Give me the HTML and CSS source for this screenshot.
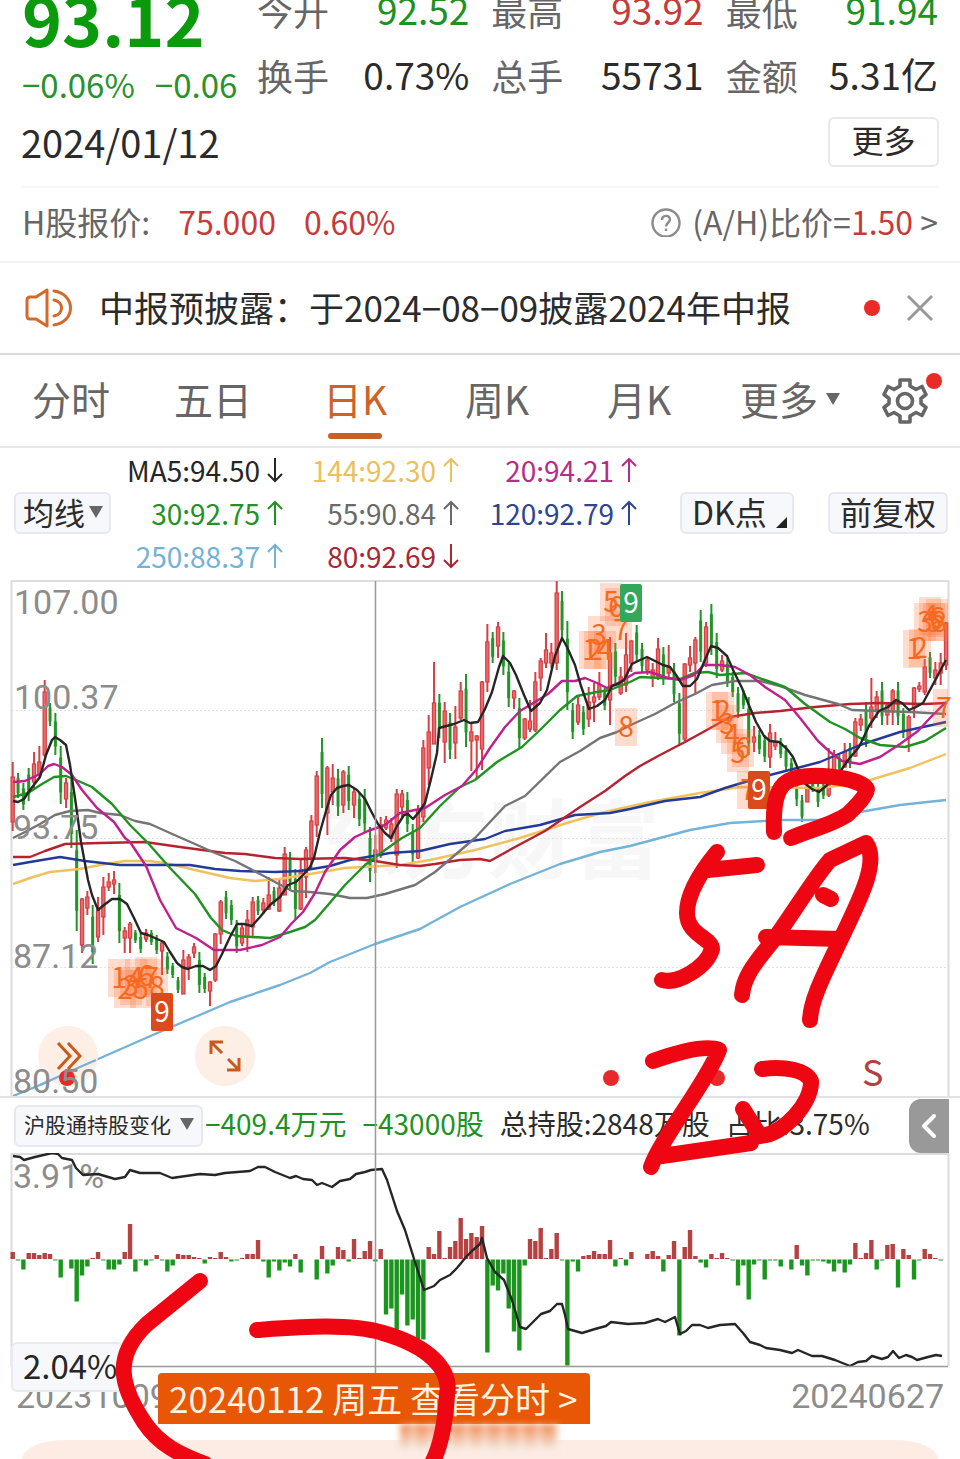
FILE: index.html
```html
<!DOCTYPE html>
<html lang="zh-CN">
<head>
<meta charset="utf-8">
<meta name="viewport" content="width=device-width, initial-scale=1">
<title>日K 行情</title>
<link rel="stylesheet" href="styles.css">
</head>
<body>
<svg class="defs" aria-hidden="true">
  <symbol id="up" viewBox="0 0 16 26"><path d="M8 25V2M1 9l7-7 7 7" fill="none" stroke="currentColor" stroke-width="2"/></symbol>
  <symbol id="down" viewBox="0 0 16 26"><path d="M8 1v23M1 17l7 7 7-7" fill="none" stroke="currentColor" stroke-width="2"/></symbol>
</svg>

<header class="quote">
  <div class="quote-main">
    <strong class="price">93.12</strong>
    <p class="change"><span>−0.06%</span><span>−0.06</span></p>
  </div>
  <dl class="stats">
    <div><dt>今开</dt><dd class="green">92.52</dd></div>
    <div><dt>最高</dt><dd class="red">93.92</dd></div>
    <div><dt>最低</dt><dd class="green">91.94</dd></div>
    <div><dt>换手</dt><dd>0.73%</dd></div>
    <div><dt>总手</dt><dd>55731</dd></div>
    <div><dt>金额</dt><dd>5.31亿</dd></div>
  </dl>
</header>
<div class="date-row"><time datetime="2024-01-12">2024/01/12</time><button class="more" type="button">更多</button></div>

<section class="h-share">
  <span>H股报价:</span><span class="red h-price">75.000</span><span class="red">0.60%</span>
  <a class="ratio" href="#ratio">
    <svg width="32" height="32" viewBox="0 0 32 32" fill="none" stroke="#8c8c8c" stroke-width="2.4"><circle cx="16" cy="18" r="13.5"/><path d="M12 15c0-5.400 8-5.400 8-.4 0 3-4 3.400-4 7"/><path d="M16 23.500v2.500"/></svg>
    <span>(A/H)比价=<b>1.50</b> &gt;</span>
  </a>
</section>

<section class="notice">
  <svg width="48" height="40" viewBox="0 0 48 40" fill="none" stroke="#d5692a" stroke-width="3" stroke-linejoin="round" stroke-linecap="round"><path d="M22 2v36L11 31H5q-3 0-3-3V12q0-3 3-3h6z"/><path d="M29 3c22 3 22 31 0 34M29 12c10 2 10 14 0 16"/></svg>
  <p>中报预披露：于2024−08−09披露2024年中报</p>
  <i class="dot"></i>
  <button class="close" type="button" aria-label="关闭"><svg width="28" height="28" viewBox="0 0 28 28" stroke="#999" stroke-width="3"><path d="M2 2l24 24M26 2L2 26"/></svg></button>
</section>

<nav class="tabs">
  <button type="button">分时</button><button type="button">五日</button><button type="button" class="active">日K</button><button type="button">周K</button><button type="button">月K</button>
  <button type="button" class="tab-more">更多<i class="caret"></i></button>
  <button type="button" class="gear" aria-label="设置">
    <svg width="46" height="46" viewBox="0 0 46 46" fill="none" stroke="#666" stroke-width="3.6" stroke-linejoin="round"><path d="M18 2h10v6l6 3.500 6-3 4 8-5 4v5l5 4-4 8-6-3-6 3.500v6H18v-6l-6-3.500-6 3-4-8 5-4v-5l-5-4 4-8 6 3L18 8z"/><circle cx="23" cy="23" r="7.500"/></svg><i class="dot"></i>
  </button>
</nav>

<section class="averages">
  <label class="pick pick-ma"><select aria-label="均线"><option>均线</option></select><i class="caret"></i></label>
  <ul>
    <li class="k">MA5:94.50<svg><use href="#down"/></svg></li><li class="y">144:92.30<svg><use href="#up"/></svg></li><li class="m">20:94.21<svg><use href="#up"/></svg></li>
    <li class="g">30:92.75<svg><use href="#up"/></svg></li><li class="s">55:90.84<svg><use href="#up"/></svg></li><li class="b">120:92.79<svg><use href="#up"/></svg></li>
    <li class="c">250:88.37<svg><use href="#up"/></svg></li><li class="r">80:92.69<svg><use href="#down"/></svg></li>
  </ul>
  <button type="button" class="chip dk">DK点<i class="corner"></i></button>
  <button type="button" class="chip">前复权</button>
</section>

<main class="stage">
  <div class="chart">
    <svg class="plot" viewBox="0 580 960 516" role="img" aria-label="日K线图">
      <g class="watermark"><text x="316" y="872">东方财富</text></g>
      <path class="frame" d="M11.500 1096V581H948.500V1096"/>
      <path class="grid" d="M12 710.500H948M12 838.500H948M12 967.500H948"/>
      <g id="candles"></g>
      <g class="lines">
        <polyline stroke="#74b3d8" points="13,1096 40,1085 80,1067 155,1034 195,1017 230,1002 280,985 310,973 330,962 375,944 420,929 460,907 510,884 560,864 600,852 630,846 660,838 690,830 730,823 780,820 820,820 860,812 900,805 946,800"/>
        <polyline stroke="#f0c25e" points="13,884 30,878 50,872 80,869 100,865 125,861 150,861 170,864 195,870 230,878 255,881 280,879 310,874 345,868 400,865 430,860 475,850 520,838 570,822 605,812 650,802 700,793 740,787 820,788 860,783 880,777 910,768 946,754"/>
        <polyline stroke="#243a98" points="13,865 30,862 60,857 85,861 120,865 150,865 190,865 215,869 240,871 275,872 300,871 330,866 350,860 390,853 420,851 450,844 485,839 505,831 540,825 575,815 610,813 630,809 665,801 700,797 725,788 745,782 770,775 820,762 860,745 900,732 946,722"/>
        <polyline stroke="#b7222f" points="13,857 30,857 45,851 65,844 100,843 145,842 180,847 225,853 245,854 275,858 300,859 345,858 375,861 400,865 420,866 435,864 460,860 480,859 490,861 515,847 545,831 580,807 605,791 625,776 640,766 660,755 685,742 705,731 730,717 755,713 780,711 815,707 850,704 880,703 925,704 946,703"/>
        <polyline stroke="#747474" points="13,838 25,832 40,824 55,815 70,811 88,810 100,813 120,815 135,821 150,824 170,833 195,844 215,853 235,861 260,874 275,882 292,891 310,892 330,894 350,898 367,898 385,894 415,885 435,872 455,855 475,838 490,822 505,806 525,796 560,762 580,751 600,738 617,732 635,723 655,714 675,703 695,694 712,685 735,681 760,681 780,686 805,695 838,704 852,710 880,711 910,712 946,714"/>
        <polyline stroke="#1f9222" points="13,797 28,793 42,784 54,777 66,776 76,780 92,787 112,804 130,825 148,843 170,868 195,894 211,918 222,930 236,936 270,938 290,932 305,927 315,920 328,905 345,885 365,865 385,850 402,838 420,828 440,806 460,787 475,780 497,762 522,747 540,730 560,710 577,696 597,692 610,690 630,682 640,677 660,678 680,679 694,673 708,672 720,675 745,673 765,680 785,687 805,704 830,722 845,729 860,738 880,745 905,747 925,741 946,728"/>
        <polyline stroke="#c01f8c" points="13,782 25,781 40,774 48,766 54,764 62,767 72,775 82,790 97,808 114,822 125,838 130,842 146,866 160,900 176,928 196,938 214,950 240,950 262,945 280,937 292,923 303,912 315,893 325,872 340,850 355,837 368,831 385,825 400,813 415,810 425,808 445,795 462,786 476,770 490,748 505,727 520,711 535,702 548,694 562,681 575,681 585,678 597,683 607,688 620,682 635,673 650,672 668,678 680,680 694,675 704,665 720,665 735,667 750,675 765,687 785,700 800,718 818,741 830,752 842,761 860,764 880,757 900,744 918,731 930,718 946,702"/>
        <polyline stroke="#262626" points="13,801 18,802 24,799 30,790 40,777 46,755 52,740 55,737 60,740 66,745 70,765 76,805 81,842 88,880 92,895 98,910 104,905 112,899 120,899 127,904 134,918 141,933 148,935 155,938 164,942 170,952 177,963 182,967 188,969 196,966 203,966 210,970 216,966 222,954 230,937 237,924 244,924 252,926 260,917 270,905 280,897 288,885 296,882 303,875 310,867 314,858 320,832 326,811 331,795 337,788 343,786 349,785 357,790 365,799 371,811 378,824 385,833 391,838 397,826 404,815 408,814 413,819 419,812 425,803 431,779 437,753 439,728 454,724 464,720 470,723 478,722 485,709 492,692 499,667 503,656 510,663 516,675 524,695 531,711 540,703 547,690 555,656 562,638 567,647 575,665 581,686 589,709 597,706 605,700 612,686 618,684 624,680 632,664 640,660 647,657 655,661 663,665 670,667 676,675 683,686 690,686 697,679 704,662 711,646 718,648 727,656 734,672 742,688 748,703 756,722 764,736 770,741 779,742 787,749 793,757 798,769 803,782 812,789 819,792 826,786 838,775 848,760 859,747 869,726 879,711 888,707 896,700 902,703 909,710 916,707 923,703 931,688 938,675 946,660"/>
      </g>
      <g id="marks" class="marks"></g>
      <g class="fab-bg"><circle cx="68" cy="1056" r="30"/><circle cx="225" cy="1056" r="30"/></g>
      <polyline class="over" points="40,1085 80,1067 96,1060"/>
      <g class="events"><circle cx="67" cy="1078" r="8"/><circle cx="611" cy="1078" r="8"/><circle cx="717" cy="1078" r="8"/></g>
      <text class="sell" x="862" y="1086">S</text>
      <g class="axis"><text x="14" y="614">107.00</text><text x="14" y="709">100.37</text><text x="13" y="839">93.75</text><text x="13" y="968">87.12</text><text x="13" y="1093">80.50</text></g>
    </svg>
    <button class="fab fab-next" type="button" aria-label="展开"><svg width="28" height="30" viewBox="0 0 28 30"><path d="M4 2l12 13L4 28M14 2l12 13L14 28"/></svg></button>
    <button class="fab fab-full" type="button" aria-label="全屏"><svg width="32" height="32" viewBox="0 0 32 32"><path d="M2 14V2h12M2 2l11 11M30 18v12H18M30 30L19 19"/></svg></button>
  </div>

  <div class="strip">
    <label class="pick pick-flow"><select aria-label="指标"><option>沪股通持股变化</option></select><i class="caret"></i></label>
    <p><span class="green">−409.4万元</span><span class="green">−43000股</span><span>总持股:2848万股</span><span>占比:3.75%</span></p>
    <button class="fold" type="button" aria-label="收起"><svg width="20" height="28" viewBox="0 0 20 28"><path d="M15 4L5 14l10 10"/></svg></button>
  </div>

  <svg class="plot" viewBox="0 1153 960 220" role="img" aria-label="沪股通持股变化图">
    <path class="frame" d="M11.500 1366V1154H948.500V1366"/>
    <g class="axis"><text x="13" y="1188">3.91%</text><text x="15" y="1366">2.04%</text></g>
    <g id="bars"></g>
    <polyline class="holding" points="13,1156 20,1157 24,1160 35,1157 52,1153 58,1154 62,1158 72,1160 76,1168 83,1175 98,1174 115,1179 125,1177 130,1170 140,1173 160,1173 172,1178 200,1174 215,1175 225,1173 250,1171 258,1167 265,1167 275,1172 290,1178 296,1176 303,1179 312,1180 317,1185 322,1183 332,1187 340,1181 350,1179 356,1174 365,1172 371,1170 382,1169 387,1180 397,1211 405,1230 415,1262 424,1290 434,1286 440,1280 450,1275 457,1268 466,1257 473,1250 480,1244 482,1238 487,1258 495,1272 504,1280 512,1300 520,1327 526,1329 535,1320 541,1314 550,1311 557,1304 562,1304 565,1315 568,1329 582,1333 595,1329 606,1326 611,1322 628,1324 645,1323 658,1319 665,1322 675,1317 680,1334 686,1331 692,1325 700,1325 708,1328 720,1325 735,1324 743,1333 750,1342 760,1345 766,1348 780,1350 792,1353 798,1350 812,1356 822,1356 835,1360 845,1364 850,1366 858,1362 866,1361 872,1356 882,1359 888,1357 893,1351 899,1358 906,1355 912,1357 917,1360 928,1357 936,1355 942,1356"/>
    <path class="cross" d="M12 1366.500H948"/>
  </svg>

  <div class="dates">
    <span>20231009</span><span>20240627</span>
    <output class="value">2.04%</output>
    <a class="tip" href="#minute">20240112 周五 查看分时 &gt;</a>
    <i class="smudge"></i>
  </div>
  <div class="sheet"></div>

  <svg class="ink" viewBox="0 580 960 879" preserveAspectRatio="xMidYMin meet" aria-hidden="true">
    <path class="cross" d="M375.500 581V1373"/>
    <g class="pen">
      <path d="M774 832C773 808 775 788 788 781C806 771 860 777 867 789C866 797 854 808 848 814C833 825 811 829 791 838"/>
      <path d="M717 852C702 870 687 894 687 913C687 935 712 938 712 949C707 967 677 985 662 980M708 870L757 865"/>
      <path d="M830 860C815 877 793 913 775 938C758 960 744 974 742 995M830 860L866 843C880 862 859 901 838 945C824 975 811 999 810 1020M766 937L840 939M823 895L831 899"/>
      <path d="M653 1061C681 1051 707 1045 719 1050C707 1082 660 1140 651 1167M662 1156L751 1143M762 1069C785 1066 806 1070 811 1081C812 1103 784 1134 760 1136L743 1109"/>
      <path d="M200 1281L147 1324C112 1357 121 1387 144 1422C159 1445 181 1455 205 1464M257 1330C300 1327 350 1323 383 1333C428 1346 452 1369 447 1395C445 1427 440 1449 431 1465"/>
    </g>
  </svg>
</main>
<script src="chart.js"></script>
</body>
</html>
```
FILE: chart.js
```js
const NS = "http://www.w3.org/2000/svg";
const STEP = 16 / 3;
const xAt = (i) => 12.7 + i * STEP;

function add(parent, tag, attrs, text) {
  const node = document.createElementNS(NS, tag);
  for (const key in attrs) node.setAttribute(key, attrs[key]);
  if (text) node.textContent = text;
  parent.appendChild(node);
}

/* One session per entry: high,low for a falling day; high,low,open,close for a rising day. */
const sessions = `762,831,777,822 773,798 783,810 768,801 752,788,764,782 746,778,762,775 680,757,692,755 703,726 713,755 746,804
778,808,783,799 778,848 830,931 898,953,899,945 891,915,897,908 905,964 897,942,910,937 877,935,887,917 873,891,882,887 871,894,880,884
883,943 927,953,931,938 922,953,924,938 930,943 933,953 929,942,933,939 930,945 935,954 942,975,943,951 952,974
963,978 977,993 950,994,960,994 954,980,957,967 943,958,947,953 952,993 973,993 981,1006,982,991 933,982,934,980 900,944,902,934
891,919 900,925 920,953 923,946,928,943 910,952,920,937 897,938,902,927 896,915 898,914,903,910 877,910,895,909 887,906
880,912,888,911 847,895,854,895 852,890 869,919 858,910,870,909 847,898,850,877 815,868,821,858 771,837,776,825 738,808 766,835,768,813
764,805,778,792 769,816 770,813,772,805 766,810 788,818,792,805 792,826 789,832 827,882 835,873,850,860 817,858,825,855
816,830,820,828 818,842,824,838 789,868,794,855 790,817,794,807 792,832 824,862 805,859,810,858 740,822,748,817 715,785,732,768 662,744,703,744
694,738 702,763,711,742 713,759 706,759,727,743 682,720,691,718 674,747 722,771,732,741 735,779,736,740 681,770,682,749 624,692,642,682
632,663 622,658,627,646 632,675 663,707 690,709,691,698 698,748 718,740,719,738 700,732,721,729 672,732,682,730 658,691,661,678
633,668,650,663 643,668,653,663 581,670,593,663 591,640 621,710 703,739 697,725,705,722 706,735 687,727,702,719 683,722,697,702
672,700,685,697 688,710 637,725,653,700 643,685 667,695,677,693 633,692,655,685 640,672,641,663 625,662 643,672 657,675,660,670
663,687,670,678 638,680,649,677 647,685 645,678,667,673 663,702 693,744 663,741,664,739 646,672,658,665 637,693,640,663 610,662
622,667,627,663 604,655 633,678 655,672,661,670 658,687 672,697 687,718 690,709 697,755 726,752,737,742
730,754 735,762 724,768,733,757 732,750,742,746 738,758 745,772 758,782 773,806 795,822 783,802,787,802
782,792 782,807 782,799 748,797,783,795 750,775,755,770 755,772 743,768,752,767 743,768 718,757,722,756 714,731,719,725
702,747 678,728,707,718 691,718,697,710 682,725 703,725,705,715 689,725,691,712 682,725 708,738 715,752,717,738 687,718,688,708
682,692,686,689 659,695,667,692 652,678 662,685,670,678 653,685,663,673 622,670,623,665`;

const candles = document.getElementById("candles");
sessions.trim().split(/\s+/).forEach((entry, i) => {
  const [high, low, top, bottom] = entry.split(",").map(Number);
  const x = xAt(i);
  const rising = top !== undefined;
  const color = rising ? "#d63f43" : "#229428";
  add(candles, "path", { d: `M${x} ${high}V${low}`, stroke: color, "stroke-width": 2 });
  if (rising) {
    add(candles, "rect", { x: x - 1.6, y: top, width: 3.2, height: bottom - top, fill: "#e86a6a", stroke: color, "stroke-width": 1.2 });
  } else {
    const inset = (low - high) * 0.2;
    add(candles, "path", { d: `M${x} ${high + inset}V${low - inset}`, stroke: color, "stroke-width": 3 });
  }
});

/* Daily change of the holding, in chart units above or below the base line. */
const changes = [7,-1,-10,6,6,4,6,5,-1,-18,0,-9,-42,-16,-7,1,7,-1,-10,-10,-5,7,35,-12,-1,-6,-1,4,-1,-12,-6,5,4,4,2,1,-4,2,1,7,2,-2,-1,1,5,5,19,-2,-18,-2,-11,-3,-7,5,-13,0,0,-20,13,-14,-6,12,9,-2,20,1,8,18,-2,10,
-55,-49,-75,-35,-66,-60,-88,-80,12,5,28,1,12,18,41,20,26,22,33,-93,-26,-31,-14,-49,-72,-91,-6,20,18,31,1,10,26,-1,-106,-2,-12,3,4,8,5,5,19,-7,1,-6,7,0,0,5,8,3,-12,4,18,-76,12,29,3,-3,-8,5,1,6,1,-1,
-26,-6,-40,-5,-1,-20,-1,-1,-7,0,-10,14,-6,-16,-1,-1,-2,-4,-12,-4,-13,-5,16,1,6,19,-10,-1,14,15,-28,10,4,-20,-1,10,5,1,-1];
const bars = document.getElementById("bars");
changes.forEach((v, i) => {
  if (!v) return;
  add(bars, "rect", { x: xAt(i) - 2.2, y: v > 0 ? 1259 - v : 1259.5, width: 4.4, height: Math.abs(v), fill: v > 0 ? "#b54242" : "#1c951f" });
});

/* Nine-turn counts: label, centre x, centre y, optional solid fill. */
const counts = [
  [1,119,978],[2,125,989],[3,131,986],[4,136,978],[5,141,989],[6,146,976],[7,151,978],[8,157,987],[9,162,1012,"#db4a1b"],
  [1,590,650],[2,595,650],[3,599,635],[4,605,650],[5,611,602],[6,616,607],[7,621,630],[8,626,727],[9,631,603,"#34a85a"],
  [1,717,711],[2,723,711],[3,727,724],[4,732,735],[5,738,753],[6,743,748],[7,748,790],[9,759,790,"#db4a1b"],
  [1,914,649],[2,920,648],[3,925,622],[4,930,616],[5,934,622],[6,937,618],[8,939,622],[7,944,708]
];
const marks = document.getElementById("marks");
counts.forEach(([n, x, y, fill]) => {
  add(marks, "rect", { x: x - 11, y: y - 19, width: Math.min(22, 948 - x + 11), height: 38, rx: fill ? 2 : 0, fill: fill || "rgba(255,110,50,.24)" });
  add(marks, "text", { x, y: y + 10, fill: fill ? "#fff" : "#f26a1b" }, String(n));
});
```
FILE: styles.css
```css
* { box-sizing: border-box; }
body { margin: 0; background: #fff; color: #2b2b2b; font: 36px/1 "Noto Sans CJK SC", "Noto Sans", sans-serif; overflow-x: hidden; }
p, dl, dd, ul { margin: 0; padding: 0; }
ul { list-style: none; }
button, select { border: 0; padding: 0; background: none; color: inherit; font: inherit; appearance: none; cursor: pointer; }
a { color: inherit; text-decoration: none; }
.defs { position: absolute; width: 0; height: 0; }
.green { color: #1c921f; }
.red { color: #c73a3a; }
.dot { width: 16px; height: 16px; border-radius: 50%; background: #ea2a27; }
.caret { width: 0; height: 0; border: 7px solid transparent; border-top: 12px solid #666; border-bottom: 0; }

.quote { display: flex; gap: 22px; height: 114px; padding: 0 22px; overflow: hidden; }
.quote-main { width: 213px; flex: none; margin-top: -14px; }
.price { display: block; font-size: 68px; line-height: 64px; color: #0a9a0c; }
.change { display: flex; gap: 20px; margin-top: 18px; font-size: 33px; line-height: 32px; color: #2a922d; white-space: nowrap; }
.stats { flex: 1; display: grid; grid-template-columns: repeat(3, 1fr); column-gap: 22px; grid-auto-rows: 65px; margin-top: -23px; }
.stats div { display: flex; justify-content: space-between; align-items: center; }
.stats dt { color: #666; }
.stats dd { font-size: 37px; }
.date-row { display: flex; justify-content: space-between; align-items: center; height: 56px; padding: 0 21px; font-size: 38px; }
.more { width: 111px; height: 50px; padding-bottom: 6px; border: 2px solid #e9e9e9; border-radius: 6px; font-size: 32px; line-height: 40px; }

.h-share { display: flex; align-items: center; height: 75px; margin: 16px 22px 0; padding-bottom: 7px; border-top: 2px solid #f6f6f6; font-size: 32px; color: #666; }
.h-price { margin: 0 28px; }
.ratio { display: flex; align-items: center; gap: 10px; margin-left: auto; }
.ratio b { font-weight: 400; color: #c73a3a; }

.notice { display: flex; align-items: center; height: 94px; padding: 0 26px 0 25px; border-top: 2px solid #f2f2f2; border-bottom: 2px solid #d9d9d9; }
.notice p { flex: 1; margin-left: 26px; padding-bottom: 4px; font-size: 35px; white-space: nowrap; }
.close { margin-left: 26px; line-height: 0; }

.tabs { display: flex; height: 93px; border-bottom: 2px solid #e8e8e8; font-size: 39px; color: #666; }
.tabs button { flex: 142 1 0; position: relative; padding-bottom: 4px; white-space: nowrap; }
.tabs .active { color: #ce6328; }
.tabs .active::after { content: ""; position: absolute; left: 50%; bottom: 7px; width: 54px; height: 6px; margin-left: -27px; border-radius: 3px; background: #ca6026; }
.tabs .tab-more { flex-grow: 160; display: flex; justify-content: center; align-items: center; gap: 8px; }
.tabs .gear { flex-grow: 90; display: flex; justify-content: center; align-items: center; padding-bottom: 0; }
.gear svg { margin-right: 20px; }
.gear .dot { position: absolute; top: 18px; right: 18px; }

.averages { display: flex; align-items: center; height: 132px; padding: 0 14px 2px; }
.averages ul { flex: none; display: grid; grid-template-columns: 172px 176px 178px; justify-items: end; margin-right: 43px; font-size: 28px; line-height: 43px; }
.averages li { display: flex; align-items: center; gap: 7px; white-space: nowrap; }
.averages li svg { width: 16px; height: 26px; }
.k { color: #262626; } .y { color: #eac05e; } .m { color: #b82b88; } .g { color: #209322; }
.s { color: #6a6a6a; } .b { color: #2d4590; } .c { color: #72b2d6; } .r { color: #a72835; }
.pick, .chip { display: flex; align-items: center; flex: none; border: 2px solid #e7e9ee; border-radius: 6px; background: #f7f8fb; }
.pick-ma { width: 97px; height: 42px; padding: 0 6px 3px 7px; font-size: 31px; }
.pick-ma select { width: 66px; height: 38px; line-height: 36px; }
.chip { position: relative; height: 42px; padding: 0 10px 5px; font-size: 32px; line-height: 36px; }
.dk { width: 114px; margin-right: 34px; }
.corner { position: absolute; right: 5px; bottom: 4px; border-left: 11px solid transparent; border-bottom: 11px solid #222; }

.stage { position: relative; overflow: hidden; }
.chart { position: relative; }
.plot { display: block; width: 100%; height: auto; }
.frame { fill: none; stroke: #dcdcdc; stroke-width: 2; }
.grid { stroke: #e2e2e2; stroke-dasharray: 2 2; }
.watermark { font-size: 86px; font-weight: 700; fill: #f7f7f8; }
.lines polyline, .over, .holding { fill: none; stroke-width: 2.4; stroke-linejoin: round; }
.over { stroke: #74b3d8; }
.holding { stroke: #262626; }
.axis { font: 34px Roboto, sans-serif; fill: #8c8c8c; }
.marks { font-size: 28px; text-anchor: middle; }
.fab-bg { fill: #fdeee6; }
.events { fill: #e62a2a; }
.sell { font-size: 36px; fill: #b34040; }
.cross { fill: none; stroke: #999; stroke-width: 1.5; }
.fab { position: absolute; bottom: 10px; width: 60px; height: 60px; border-radius: 50%; line-height: 0; }
.fab path { fill: none; stroke: #c95a1c; stroke-width: 3; }
.fab-next { left: 4%; }
.fab-full { left: 20.3%; }

.strip { display: flex; align-items: center; height: 57px; padding: 0 11px 0 14px; border-top: 2px solid #e2e2e2; }
.pick-flow { width: 189px; height: 42px; padding: 0 7px 3px 8px; font-size: 21px; }
.pick-flow select { width: 157px; height: 36px; }
.strip p { flex: 1; display: flex; gap: 16px; margin-left: 2px; padding-bottom: 6px; font-size: 28px; white-space: nowrap; }
.fold { width: 40px; height: 54px; border-radius: 12px 0 0 12px; background: #999; line-height: 0; }
.fold path { fill: none; stroke: #fff; stroke-width: 4; stroke-linecap: round; stroke-linejoin: round; }

.dates { position: relative; display: flex; justify-content: space-between; height: 67px; padding: 3px 16px 0; font: 34px/40px Roboto, sans-serif; color: #8c8c8c; }
.value { position: absolute; left: 11px; top: -31px; width: 112px; height: 50px; padding-left: 10px; border: 2px solid #e9eaee; border-radius: 6px; background: #f7f8fb; color: #262626; font: 33px/43px "Noto Sans CJK SC", sans-serif; }
.tip { position: absolute; left: 158px; top: 0; height: 51px; padding: 0 13px 0 11px; border-radius: 4px 4px 0 0; background: #e85706; color: #fff3e2; font: 35px/49px "Noto Sans CJK SC", sans-serif; white-space: nowrap; }
.smudge { position: absolute; left: 400px; top: 51px; width: 158px; height: 25px; background: repeating-linear-gradient(90deg, #fff0 0 8px, #fff6 12px 14px, #fff0 18px), linear-gradient(#f08a50, #f3e4dc); filter: blur(3px); z-index: 1; }
.sheet { height: 19px; margin: 0 22px; border-radius: 44px 44px 0 0 / 19px 19px 0 0; background: #fcece3; }
.ink { position: absolute; inset: 0; width: 100%; height: 100%; z-index: 2; pointer-events: none; }
.pen { fill: none; stroke: #ee0712; stroke-width: 16; stroke-linecap: round; stroke-linejoin: round; }
```
